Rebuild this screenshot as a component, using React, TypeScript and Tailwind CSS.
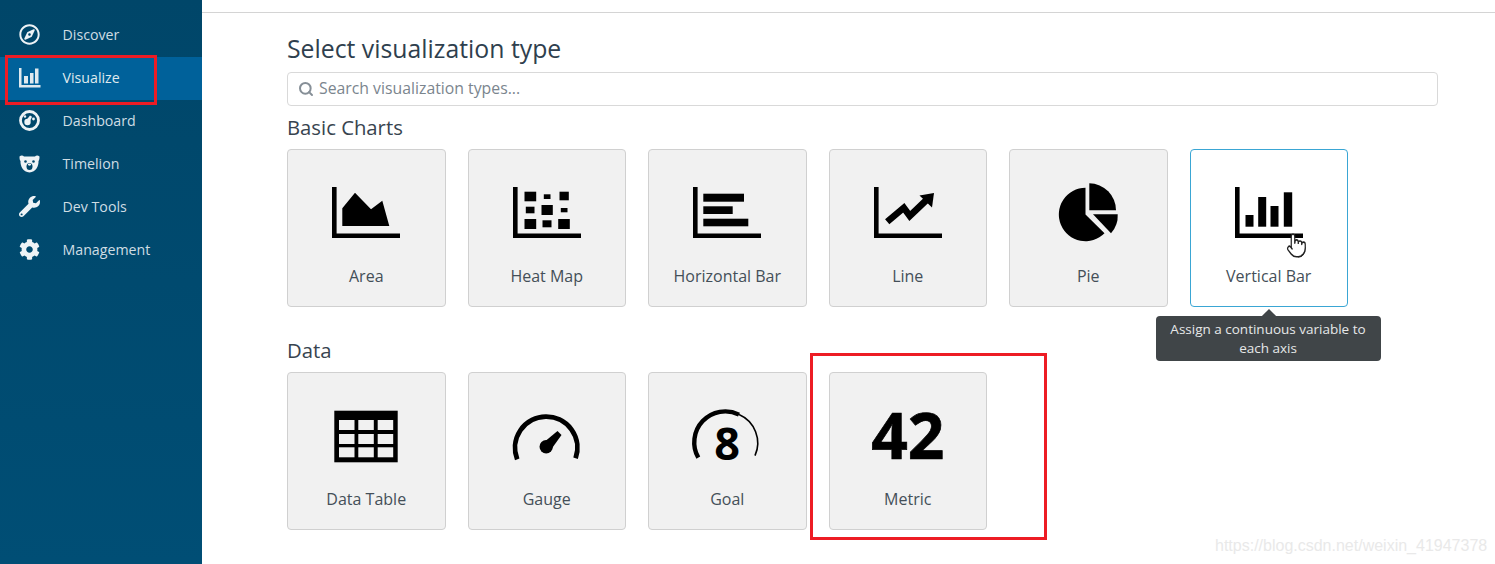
import React from 'react'
import { Search, Pointer } from 'lucide-react'
import { FaRegCompass, FaWrench, FaCog } from 'react-icons/fa'

const openSans = "font-['Open_Sans',sans-serif]"

function VisualizeIcon() {
  return (
    <svg width="22" height="20" viewBox="0 0 22 20" fill="#dfe9ee">
      <path d="M0 0h2.5v17H21.5v2.5H0z" />
      <rect x="5" y="8" width="4" height="7.5" />
      <rect x="11" y="5" width="3.5" height="10.5" />
      <rect x="16" y="0.5" width="3.5" height="15" />
    </svg>
  )
}

function DashboardIcon() {
  return (
    <svg width="21" height="21" viewBox="0 0 21 21">
      <circle cx="10.5" cy="10.5" r="9" fill="none" stroke="#eef3f6" strokeWidth="2.8" />
      <circle cx="8.5" cy="12" r="3.2" fill="#eef3f6" />
      <path d="M7.5 10 11 5.5l2 1.2-2.2 5z" fill="#eef3f6" />
      <circle cx="14.5" cy="9" r="1.4" fill="#eef3f6" />
      <circle cx="6" cy="6.5" r="1.2" fill="#eef3f6" />
    </svg>
  )
}

function BearIcon() {
  return (
    <svg width="21" height="18" viewBox="0 0 21 18">
      <path
        d="M0.5 1.5 C2 0 4 0.3 5 1.5 H16 C17 0.3 19 0 20.5 1.5 C20.5 4 20.3 5 19.5 6 C19.8 11 17 17 10.5 17.5 C4 17 1.2 11 1.5 6 C0.7 5 0.5 4 0.5 1.5z"
        fill="#eef3f6"
      />
      <circle cx="6.5" cy="6.5" r="1.3" fill="#004669" />
      <circle cx="14.5" cy="6.5" r="1.3" fill="#004669" />
      <ellipse cx="10.5" cy="11.5" rx="3" ry="3.6" fill="#004669" />
      <ellipse cx="10.5" cy="9.6" rx="1.7" ry="1.1" fill="#eef3f6" />
    </svg>
  )
}

const navItems = [
  { label: 'Discover', icon: <FaRegCompass size={21} color="#eef3f6" /> },
  { label: 'Visualize', icon: <VisualizeIcon />, active: true },
  { label: 'Dashboard', icon: <DashboardIcon /> },
  { label: 'Timelion', icon: <BearIcon /> },
  { label: 'Dev Tools', icon: <FaWrench size={21} color="#eef3f6" /> },
  { label: 'Management', icon: <FaCog size={21} color="#eef3f6" /> },
]

function Axis() {
  return <path d="M0 4h4.6v46.4H68V55H0z" />
}

function ChartSvg({ children }: { children: React.ReactNode }) {
  return (
    <svg width="68" height="60" viewBox="0 0 68 60" fill="#000" className="overflow-visible">
      {children}
    </svg>
  )
}

const areaIcon = (
  <ChartSvg>
    <Axis />
    <path d="M10.3 43V25.3L23 9.7 39 26.3 50.3 17.7 57.3 43z" />
  </ChartSvg>
)

const heatMapIcon = (
  <ChartSvg>
    <Axis />
    <rect x="11.5" y="8.7" width="11.7" height="9.6" />
    <rect x="30.8" y="11.3" width="6.7" height="4.7" />
    <rect x="46.5" y="8.7" width="9.3" height="8.6" />
    <rect x="12.8" y="23.7" width="8.7" height="6.6" />
    <rect x="28.5" y="22" width="11.3" height="10" />
    <rect x="47.8" y="25" width="6.7" height="4.3" />
    <rect x="11.5" y="36" width="11.7" height="10" />
    <rect x="29.5" y="37.3" width="9" height="7" />
    <rect x="45.2" y="36" width="11.6" height="10" />
  </ChartSvg>
)

const horizontalBarIcon = (
  <ChartSvg>
    <Axis />
    <rect x="10.3" y="10.7" width="40.7" height="8" />
    <rect x="10.3" y="23.3" width="29.4" height="7.7" />
    <rect x="10.3" y="35.7" width="45" height="7.6" />
  </ChartSvg>
)

const lineIcon = (
  <ChartSvg>
    <Axis />
    <path d="M13.2 38.7 29.8 24.7 35.8 33 52.5 17" fill="none" stroke="#000" strokeWidth="6.6" />
    <path d="M45.5 12.5 60 10 58 24.5z" />
  </ChartSvg>
)

const pieIcon = (
  <ChartSvg>
    <path d="M31.5 31.5V4.8A26.7 26.7 0 1 0 50.5 50.3z" />
    <path d="M35.3 27.3V0.3A27 27 0 0 1 62 27.3z" />
    <path d="M39 31.3H63.7A26 26 0 0 1 57 50.3z" />
  </ChartSvg>
)

const verticalBarIcon = (
  <ChartSvg>
    <Axis />
    <rect x="10.5" y="32" width="8" height="11.7" />
    <rect x="23.2" y="14" width="8" height="29.7" />
    <rect x="35.5" y="23" width="8" height="20.7" />
    <rect x="48.8" y="9.3" width="8.4" height="34.4" />
  </ChartSvg>
)

const dataTableIcon = (
  <ChartSvg>
    <rect x="2.3" y="4.7" width="63.4" height="51.6" />
    {[14, 28, 41.3].map((y) =>
      [7, 26.3, 45.7].map((x) => (
        <rect key={`${x}-${y}`} x={x} y={y} width="15.5" height="10" fill="#f1f1f1" />
      )),
    )}
  </ChartSvg>
)

const gaugeIcon = (
  <ChartSvg>
    <path d="M4.2 53.3A31.2 31.2 0 1 1 62.6 52.3" fill="none" stroke="#000" strokeWidth="4.8" />
    <circle cx="33.2" cy="40.7" r="6.7" />
    <path d="M30 37 44.5 25 48.5 29 37 45z" />
  </ChartSvg>
)

const goalIcon = (
  <ChartSvg>
    <path d="M5.3 51.7A31 31 0 0 1 46 8.6" fill="none" stroke="#000" strokeWidth="4.4" />
    <path d="M46 8.6A31 31 0 0 1 62 49.7" fill="none" stroke="#000" strokeWidth="1.6" />
    <text x="34" y="54" textAnchor="middle" fontSize="45" fontWeight="700" fontFamily="'Open Sans', sans-serif">
      8
    </text>
  </ChartSvg>
)

const metricIcon = (
  <span className="block h-[60px] text-[64px] leading-[58px] font-bold text-black [-webkit-text-stroke:0.7px_black]">
    42
  </span>
)

const basicCharts = [
  { label: 'Area', icon: areaIcon },
  { label: 'Heat Map', icon: heatMapIcon },
  { label: 'Horizontal Bar', icon: horizontalBarIcon },
  { label: 'Line', icon: lineIcon },
  { label: 'Pie', icon: pieIcon },
  { label: 'Vertical Bar', icon: verticalBarIcon, hovered: true },
]

const dataCharts = [
  { label: 'Data Table', icon: dataTableIcon },
  { label: 'Gauge', icon: gaugeIcon },
  { label: 'Goal', icon: goalIcon },
  { label: 'Metric', icon: metricIcon },
]

function VisCard({ label, icon, hovered }: { label: string; icon: React.ReactNode; hovered?: boolean }) {
  return (
    <div
      className={`relative flex h-[158px] w-[158.5px] flex-col items-center rounded-[4px] border pt-[33px] ${
        hovered ? 'border-[#3aa6d4] bg-white' : 'border-[#d0d0d0] bg-[#f1f1f1]'
      }`}
    >
      <div className="flex h-[60px] items-start justify-center">{icon}</div>
      <span className="mt-[22px] text-[16px] leading-[22px] text-[#444f58]">{label}</span>
      {hovered && (
        <>
          <Pointer
            width={21}
            height={27}
            preserveAspectRatio="none"
            strokeWidth={1.4}
            fill="#fff"
            className="absolute top-[82px] left-[95px] text-[#222]"
          />
          <div className="absolute top-[166px] left-[-35px] w-[225px] rounded-[4px] bg-[#404548] pt-[4px] pb-[3px] text-center text-[13.5px] leading-[19px] text-[#e6e8e8]">
            <span className="absolute top-[-5px] left-[108px] h-[10px] w-[10px] rotate-45 bg-[#404548]" />
            <span className="relative">
              Assign a continuous variable to
              <br />
              each axis
            </span>
          </div>
        </>
      )}
    </div>
  )
}

export default function App() {
  return (
    <div className={`relative flex h-[564px] w-[1495px] overflow-hidden bg-white ${openSans}`}>
      <aside className="w-[202px] shrink-0 bg-gradient-to-b from-[#004669] to-[#004e75] pt-[14px]">
        {navItems.map((item) => (
          <div
            key={item.label}
            className={`flex h-[43px] items-center pb-[2px] text-[14.2px] ${
              item.active ? 'bg-[#00619a] text-[#dfe9ee]' : 'text-[#cfdde4]'
            }`}
          >
            <span className="flex w-[62.5px] justify-start pl-[19px]">{item.icon}</span>
            {item.label}
          </div>
        ))}
      </aside>

      <main className="flex-1 pt-[12px]">
        <div className="h-[134px] border-t border-[#d4d4d4] pr-[57px] pl-[85px]">
          <h1 className="mt-[19px] text-[24.8px] leading-[32px] text-[#2f3f4e]">Select visualization type</h1>
          <div className="mt-[8px] flex h-[34px] items-center rounded-[4px] border border-[#d9d9d9] pl-[10px] text-[15.8px] text-[#7b858e]">
            <Search size={16} strokeWidth={3} className="mr-[5px] text-[#868f97]" />
            Search visualization types...
          </div>
          <h2 className="mt-[7px] text-[20.3px] leading-[28px] text-[#38444f]">Basic Charts</h2>
        </div>
        <div className="pl-[85px]">
          <div className="mt-[3px] flex gap-[22px]">
            {basicCharts.map((chart) => (
              <VisCard key={chart.label} {...chart} />
            ))}
          </div>
          <h2 className="mt-[29px] text-[20.3px] leading-[28px] text-[#38444f]">Data</h2>
          <div className="mt-[8px] flex gap-[22px]">
            {dataCharts.map((chart) => (
              <VisCard key={chart.label} {...chart} />
            ))}
          </div>
        </div>
      </main>

      {/* red annotation boxes drawn over the screenshot */}
      <div className="absolute top-[55px] left-[5px] h-[50px] w-[152px] border-[3px] border-[#ed1c24]" />
      <div className="absolute top-[353px] left-[810px] h-[187px] w-[237px] border-[3px] border-[#ed1c24]" />
      <span className="absolute top-[536px] left-[1215px] font-['Liberation_Sans',sans-serif] text-[16px] leading-[20px] text-[#e9e9e9]">
        https://blog.csdn.net/weixin_41947378
      </span>
    </div>
  )
}
